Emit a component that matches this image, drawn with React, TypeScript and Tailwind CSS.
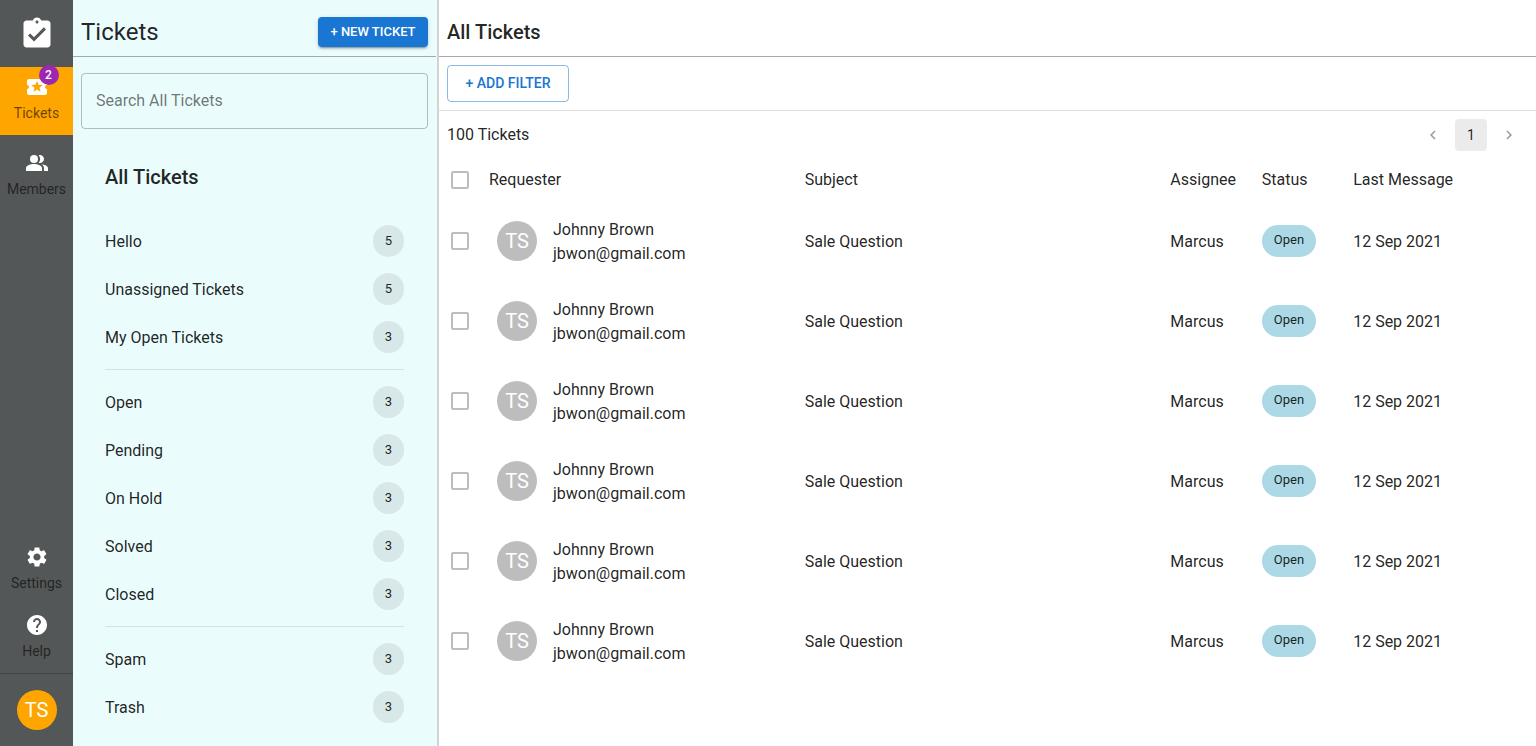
import type { ReactNode } from "react";
import {
  MdAssignmentTurnedIn,
  MdChevronLeft,
  MdChevronRight,
  MdHelp,
  MdLocalActivity,
  MdPeopleAlt,
  MdSettings,
} from "react-icons/md";

type View = { label: string; count: number };

const viewGroups: View[][] = [
  [
    { label: "Hello", count: 5 },
    { label: "Unassigned Tickets", count: 5 },
    { label: "My Open Tickets", count: 3 },
  ],
  [
    { label: "Open", count: 3 },
    { label: "Pending", count: 3 },
    { label: "On Hold", count: 3 },
    { label: "Solved", count: 3 },
    { label: "Closed", count: 3 },
  ],
  [
    { label: "Spam", count: 3 },
    { label: "Trash", count: 3 },
  ],
];

const tickets = Array.from({ length: 6 }, (_, id) => ({
  id,
  initials: "TS",
  name: "Johnny Brown",
  email: "jbwon@gmail.com",
  subject: "Sale Question",
  assignee: "Marcus",
  status: "Open",
  lastMessage: "12 Sep 2021",
}));

function NavItem({
  icon,
  label,
  badge,
  active = false,
}: {
  icon: ReactNode;
  label: string;
  badge?: number;
  active?: boolean;
}) {
  return (
    <a
      href="#"
      className={
        active
          ? "flex h-17 flex-col items-center bg-[#ffa500] pt-2"
          : "flex h-17 flex-col items-center pt-2"
      }
    >
      <span className="relative text-2xl text-white">
        {icon}
        {badge !== undefined && (
          <span className="absolute -top-2.5 -right-2.5 flex size-5 items-center justify-center rounded-full bg-[#9c27b0] text-xs font-medium">
            {badge}
          </span>
        )}
      </span>
      <span className="mt-1 text-sm text-black/60">{label}</span>
    </a>
  );
}

function NavRail() {
  return (
    <nav className="flex w-[73px] shrink-0 flex-col bg-[#545757]">
      <a href="#" aria-label="Home" className="flex h-[67px] items-center justify-center text-4xl text-white">
        <MdAssignmentTurnedIn />
      </a>
      <div className="flex flex-col gap-2">
        <NavItem icon={<MdLocalActivity />} label="Tickets" badge={2} active />
        <NavItem icon={<MdPeopleAlt />} label="Members" />
      </div>
      <div className="mt-auto">
        <NavItem icon={<MdSettings />} label="Settings" />
        <NavItem icon={<MdHelp />} label="Help" />
        <div className="flex justify-center border-t border-black/20 py-4">
          <button
            type="button"
            className="flex size-10 items-center justify-center rounded-full bg-[#ffa500] text-xl text-white"
          >
            TS
          </button>
        </div>
      </div>
    </nav>
  );
}

function ViewsPanel() {
  return (
    <aside className="w-[366px] shrink-0 border-r-2 border-[#d3d3d3] bg-[#ebfcfd] pr-px">
      <header className="flex h-[57px] items-center justify-between border-b border-[#a9a9a9] px-2 pt-2">
        <h1 className="text-2xl">Tickets</h1>
        <button
          type="button"
          className="h-[30px] min-w-[110px] rounded bg-[#1976d2] px-2.5 text-[13px] font-medium text-white shadow-[0_3px_1px_-2px_rgba(0,0,0,0.2),0_2px_2px_0_rgba(0,0,0,0.14),0_1px_5px_0_rgba(0,0,0,0.12)]"
        >
          + NEW TICKET
        </button>
      </header>
      <div className="px-2 pt-4">
        <input
          type="search"
          aria-label="Search All Tickets"
          placeholder="Search All Tickets"
          className="h-14 w-full rounded border border-black/25 bg-transparent px-3.5 pb-0.5 text-base outline-none placeholder:text-black/55"
        />
      </div>
      <div className="px-8 pt-8">
        <h2 className="flex h-8 items-center text-xl font-medium">All Tickets</h2>
        <div className="mt-6 divide-y divide-black/10">
          {viewGroups.map((group) => (
            <ul key={group[0].label} className="py-2 first:pt-0">
              {group.map((view) => (
                <li key={view.label}>
                  <a href="#" className="flex h-12 items-center justify-between">
                    <span className="pt-0.5">{view.label}</span>
                    <span className="flex h-8 items-center rounded-full bg-black/8 px-3 text-[13px]">
                      {view.count}
                    </span>
                  </a>
                </li>
              ))}
            </ul>
          ))}
        </div>
      </div>
    </aside>
  );
}

function Checkbox({ label }: { label: string }) {
  return (
    <input
      type="checkbox"
      aria-label={label}
      className="mx-auto block size-[18px] appearance-none rounded-xs border-2 border-[#bdbdbd] checked:bg-[#1976d2]"
    />
  );
}

function TicketTable() {
  return (
    <table className="w-full table-fixed text-left">
      <colgroup>
        <col className="w-[42px]" />
        <col />
        <col className="w-1/3" />
        <col className="w-1/12" />
        <col className="w-1/12" />
        <col className="w-1/6" />
      </colgroup>
      <thead>
        <tr className="h-[42px]">
          <th>
            <Checkbox label="Select all tickets" />
          </th>
          <th className="pl-2 font-normal">Requester</th>
          <th className="font-normal">Subject</th>
          <th className="font-normal">Assignee</th>
          <th className="font-normal">Status</th>
          <th className="font-normal">Last Message</th>
        </tr>
      </thead>
      <tbody>
        {tickets.map((ticket) => (
          <tr key={ticket.id} className="h-20">
            <td>
              <Checkbox label={`Select ticket ${ticket.id + 1}`} />
            </td>
            <td>
              <div className="flex items-center gap-4 pl-4">
                <span className="flex size-10 shrink-0 items-center justify-center rounded-full bg-[#bdbdbd] text-xl text-white">
                  {ticket.initials}
                </span>
                <div className="pt-0.5">
                  <p>{ticket.name}</p>
                  <p>{ticket.email}</p>
                </div>
              </div>
            </td>
            <td className="pt-0.5">{ticket.subject}</td>
            <td className="pt-0.5">{ticket.assignee}</td>
            <td>
              <span className="flex h-8 w-fit items-center rounded-full bg-[#add8e6] px-3 pb-0.5 text-[13px]">
                {ticket.status}
              </span>
            </td>
            <td className="pt-0.5">{ticket.lastMessage}</td>
          </tr>
        ))}
      </tbody>
    </table>
  );
}

export default function App() {
  return (
    <div className="flex min-h-screen bg-white font-[Roboto,sans-serif] text-base text-black/87">
      <NavRail />
      <ViewsPanel />
      <main className="min-w-0 flex-1">
        <header className="flex h-[57px] items-center border-b border-[#a9a9a9] px-2 pt-2">
          <h2 className="text-xl font-medium">All Tickets</h2>
        </header>
        <div className="border-b border-black/12 p-2">
          <button
            type="button"
            className="h-[37px] min-w-[122px] rounded border border-[#1976d2]/50 px-[15px] pb-0.5 text-sm font-medium text-[#1976d2]"
          >
            + ADD FILTER
          </button>
        </div>
        <div className="flex items-center justify-between pt-2 pr-[11px] pl-2">
          <p>100 Tickets</p>
          <div className="flex items-center gap-1.5">
            <button
              type="button"
              aria-label="Previous page"
              className="flex size-8 items-center justify-center text-lg text-black/40"
            >
              <MdChevronLeft />
            </button>
            <button type="button" className="size-8 rounded bg-black/8 text-sm">
              1
            </button>
            <button
              type="button"
              aria-label="Next page"
              className="flex size-8 items-center justify-center text-lg text-black/40"
            >
              <MdChevronRight />
            </button>
          </div>
        </div>
        <div className="pt-2">
          <TicketTable />
        </div>
      </main>
    </div>
  );
}
